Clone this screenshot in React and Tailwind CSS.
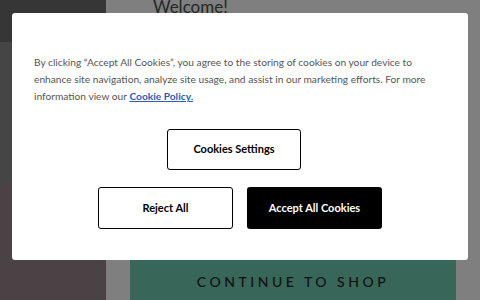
import React from "react";

export default function App() {
  return (
    <div className="relative w-[480px] h-[300px] overflow-hidden flex" style={{ fontFamily: "Lato, 'Noto Sans', sans-serif" }}>
      {/* left column */}
      <div className="w-[106px] h-full flex flex-col">
        <div className="h-[42px] bg-[#363636]" />
        <div className="h-[140px] bg-[#454545]" />
        <div className="flex-1 bg-[#4a4245]" />
      </div>
      {/* main area */}
      <div className="flex-1 h-full bg-[#7f7f7f] flex flex-col">
        <div className="pl-[47px] h-[14px]">
          <div className="text-[17px] leading-[14px] text-[#262626]">Welcome!</div>
        </div>
        <div className="flex-1" />
        <div className="mx-[24px] h-[60px] bg-[#386658] flex items-end justify-center pb-[11px]">
          <span className="text-[14px] leading-[14px] tracking-[3.5px] text-[#111] font-medium">CONTINUE TO SHOP</span>
        </div>
      </div>

      {/* cookie modal */}
      <div className="absolute left-[12px] top-[13px] w-[456px] h-[247px] bg-white rounded-[3px] px-[22px] pt-[41px]">
        <p className="text-[10.2px] leading-[17px] text-[#555] whitespace-nowrap">
          By clicking “Accept All Cookies”, you agree to the storing of cookies on your device to
          <br />
          enhance site navigation, analyze site usage, and assist in our marketing efforts. For more
          <br />
          information view our{" "}
          <a className="font-bold text-[#2e5bb8] underline">Cookie Policy.</a>
        </p>
        <div className="mt-[24px] flex flex-col items-center gap-[17px]">
          <button className="mr-[12px] w-[134px] h-[41px] border border-black rounded-[3px] bg-white text-[11px] font-bold text-black">Cookies Settings</button>
          <div className="flex gap-[14px]">
            <button className="w-[135px] h-[42px] border border-black rounded-[3px] bg-white text-[11px] font-bold text-black">Reject All</button>
            <button className="w-[135px] h-[42px] rounded-[3px] bg-black text-[11px] font-bold text-white">Accept All Cookies</button>
          </div>
        </div>
      </div>
    </div>
  );
}
